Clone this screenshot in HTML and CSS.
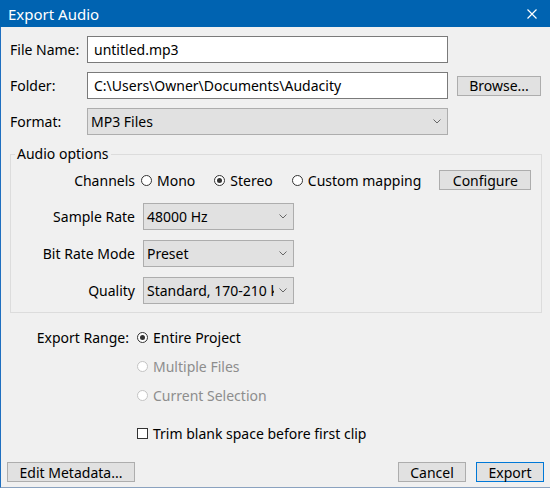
FILE: index.html
```html
<!DOCTYPE html>
<html>
<head>
  <title>Export Audio</title>
  <link rel="stylesheet" href="styles.css">
</head>
<body>
  <div class="window">
    <div class="titlebar">
      <span class="title">Export Audio</span>
      <svg class="close" width="10" height="10" viewBox="0 0 10 10">
        <path d="M0.5 0.5 L9.5 9.5 M9.5 0.5 L0.5 9.5" stroke="#fff" stroke-width="1.2" fill="none"/>
      </svg>
    </div>

    <div class="content">
      <div class="row">
        <span class="label">File Name:</span>
        <div class="input">untitled.mp3</div>
      </div>
      <div class="row">
        <span class="label">Folder:</span>
        <div class="input">C:\Users\Owner\Documents\Audacity</div>
        <button class="btn browse">Browse...</button>
      </div>
      <div class="row">
        <span class="label">Format:</span>
        <div class="select wide">
          <span>MP3 Files</span>
          <svg width="8" height="5" viewBox="0 0 8 5"><path d="M0.5 0.5 L4 4 L7.5 0.5" stroke="#666" fill="none"/></svg>
        </div>
      </div>

      <fieldset class="group">
        <legend>Audio options</legend>
        <div class="options">
          <span class="opt-label">Channels</span>
          <div class="channels">
            <label class="radio"><span class="dot"></span>Mono</label>
            <label class="radio"><span class="dot checked"></span>Stereo</label>
            <label class="radio"><span class="dot"></span>Custom mapping</label>
            <button class="btn configure">Configure</button>
          </div>

          <span class="opt-label">Sample Rate</span>
          <div class="select small">
            <span>48000 Hz</span>
            <svg width="8" height="5" viewBox="0 0 8 5"><path d="M0.5 0.5 L4 4 L7.5 0.5" stroke="#666" fill="none"/></svg>
          </div>

          <span class="opt-label">Bit Rate Mode</span>
          <div class="select small">
            <span>Preset</span>
            <svg width="8" height="5" viewBox="0 0 8 5"><path d="M0.5 0.5 L4 4 L7.5 0.5" stroke="#666" fill="none"/></svg>
          </div>

          <span class="opt-label">Quality</span>
          <div class="select small">
            <span class="clip">Standard, 170-210 kbps</span>
            <svg width="8" height="5" viewBox="0 0 8 5"><path d="M0.5 0.5 L4 4 L7.5 0.5" stroke="#666" fill="none"/></svg>
          </div>
        </div>
      </fieldset>

      <div class="range">
        <span class="opt-label">Export Range:</span>
        <label class="radio"><span class="dot checked"></span>Entire Project</label>
        <span></span>
        <label class="radio disabled"><span class="dot"></span>Multiple Files</label>
        <span></span>
        <label class="radio disabled"><span class="dot"></span>Current Selection</label>
        <span></span>
        <label class="radio trim"><span class="box"></span>Trim blank space before first clip</label>
      </div>

      <div class="footer">
        <button class="btn meta">Edit Metadata...</button>
        <div class="spacer"></div>
        <button class="btn action">Cancel</button>
        <button class="btn action default">Export</button>
      </div>
    </div>
  </div>
</body>
</html>
```

FILE: styles.css
```css
body {
  margin: 0;
  background-color: #fff;
  font-family: "Noto Sans", "Open Sans", sans-serif;
  font-size: 14px;
  color: #000;
}

.window {
  width: 550px;
  height: 488px;
  box-sizing: border-box;
  border-left: 1px solid #1e6fc0;
  border-bottom: 1px solid #8aa2bf;
  background-color: #f0f0f0;
  display: flex;
  flex-direction: column;
}

.titlebar {
  height: 27px;
  margin-left: -1px;
  background-color: #0063b1;
  display: flex;
  align-items: center;
  padding-left: 8px;
  padding-right: 13px;
}

.title {
  color: #fff;
  font-size: 15px;
  flex: 1;
}

.content {
  flex: 1;
  display: flex;
  flex-direction: column;
  padding: 9px 0 0 9px;
}

.row {
  display: flex;
  align-items: center;
  height: 27px;
  margin-bottom: 9px;
}

.label {
  width: 77px;
}

.input {
  width: 361px;
  height: 27px;
  box-sizing: border-box;
  border: 1px solid #7a7a7a;
  background-color: #fff;
  padding-left: 6px;
  display: flex;
  align-items: center;
}

.btn {
  font-family: inherit;
  font-size: 14px;
  color: #000;
  background-color: #e1e1e1;
  border: 1px solid #adadad;
  padding: 0;
  height: 20px;
  line-height: 17px;
}

.browse {
  width: 84px;
  margin-left: 9px;
}

.select {
  height: 27px;
  box-sizing: border-box;
  border: 1px solid #adadad;
  background-color: #e1e1e1;
  display: flex;
  align-items: center;
  justify-content: space-between;
  padding: 0 6px 0 3px;
}

.select.wide {
  width: 361px;
}

.select.small {
  width: 151px;
}

.clip {
  width: 127px;
  overflow: hidden;
  white-space: nowrap;
}

.group {
  margin: 1px 0 0 0;
  width: 532px;
  box-sizing: border-box;
  border: 1px solid #dcdcdc;
  padding: 4px 0 8px 0;
}

.group legend {
  padding: 0 2px;
  margin-left: 4px;
  line-height: 18px;
}

.options {
  display: grid;
  grid-template-columns: 124px auto;
  column-gap: 8px;
  row-gap: 10px;
  align-items: center;
}

.opt-label {
  text-align: right;
}

.channels {
  display: flex;
  align-items: center;
  height: 26px;
  margin-left: -2px;
}

.radio {
  display: flex;
  align-items: center;
  gap: 5px;
  margin-right: 19px;
}

.dot {
  width: 9px;
  height: 9px;
  border: 1px solid #333;
  border-radius: 50%;
  background-color: #fff;
  position: relative;
}

.dot.checked::after {
  content: "";
  position: absolute;
  left: 2px;
  top: 2px;
  width: 5px;
  height: 5px;
  border-radius: 50%;
  background-color: #333;
}

.disabled {
  color: #8d8d8d;
}

.disabled .dot {
  border-color: #c4c4c4;
}

.box {
  width: 9px;
  height: 9px;
  border: 1px solid #333;
  background-color: #fff;
}

.configure {
  width: 92px;
  margin-left: -1px;
}

.range {
  display: grid;
  grid-template-columns: 119px auto;
  column-gap: 8px;
  grid-auto-rows: 29px;
  align-items: center;
  margin-top: 10px;
}

.trim {
  margin-top: 18px;
}

.footer {
  margin-top: auto;
  margin-bottom: 5px;
  margin-left: -3px;
  display: flex;
  align-items: center;
}

.spacer {
  flex: 1;
}

.meta {
  width: 128px;
}

.action {
  width: 68px;
  margin-right: 10px;
}

.default {
  border-color: #0078d7;
  margin-right: 6px;
}
```
